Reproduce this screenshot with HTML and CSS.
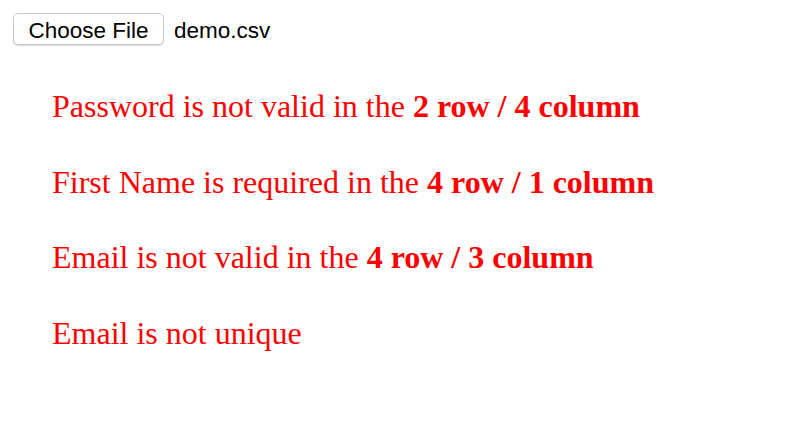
FILE: index.html
```html
<!DOCTYPE html>
<html>
<head>
<meta charset="utf-8">
<link rel="stylesheet" href="styles.css">
</head>
<body>
<div class="file-row">
  <button class="file-btn" type="button">Choose File</button>
  <span class="file-name">demo.csv</span>
</div>
<ul class="errors">
  <li>Password is not valid in the <b>2 row / 4 column</b></li>
  <li>First Name is required in the <b>4 row / 1 column</b></li>
  <li>Email is not valid in the <b>4 row / 3 column</b></li>
  <li>Email is not unique</li>
</ul>
</body>
</html>
```
FILE: styles.css
```css
html, body {
  margin: 0;
  padding: 0;
  background: #fff;
}
.file-row {
  display: flex;
  align-items: center;
  padding: 13px 0 0 13px;
  gap: 10px;
  font-family: "Liberation Sans", Arial, sans-serif;
  font-size: 22.5px;
  color: #000;
}
.file-name {
  padding-top: 3px;
}
.file-btn {
  height: 32px;
  width: 151px;
  padding: 3px 0 0;
  font-family: "Liberation Sans", Arial, sans-serif;
  font-size: 22.5px;
  color: #000;
  background: #fff;
  border: 1px solid #c8c8c8;
  border-radius: 5px;
  box-shadow: 0 1px 1px rgba(0,0,0,0.15);
}
.errors {
  list-style: none;
  margin: 0;
  padding: 43px 0 0 52px;
  font-family: "Liberation Serif", "Times New Roman", serif;
  font-size: 32px;
  color: #ff0000;
}
.errors li {
  line-height: 36px;
  margin-bottom: 39.5px;
}
```
